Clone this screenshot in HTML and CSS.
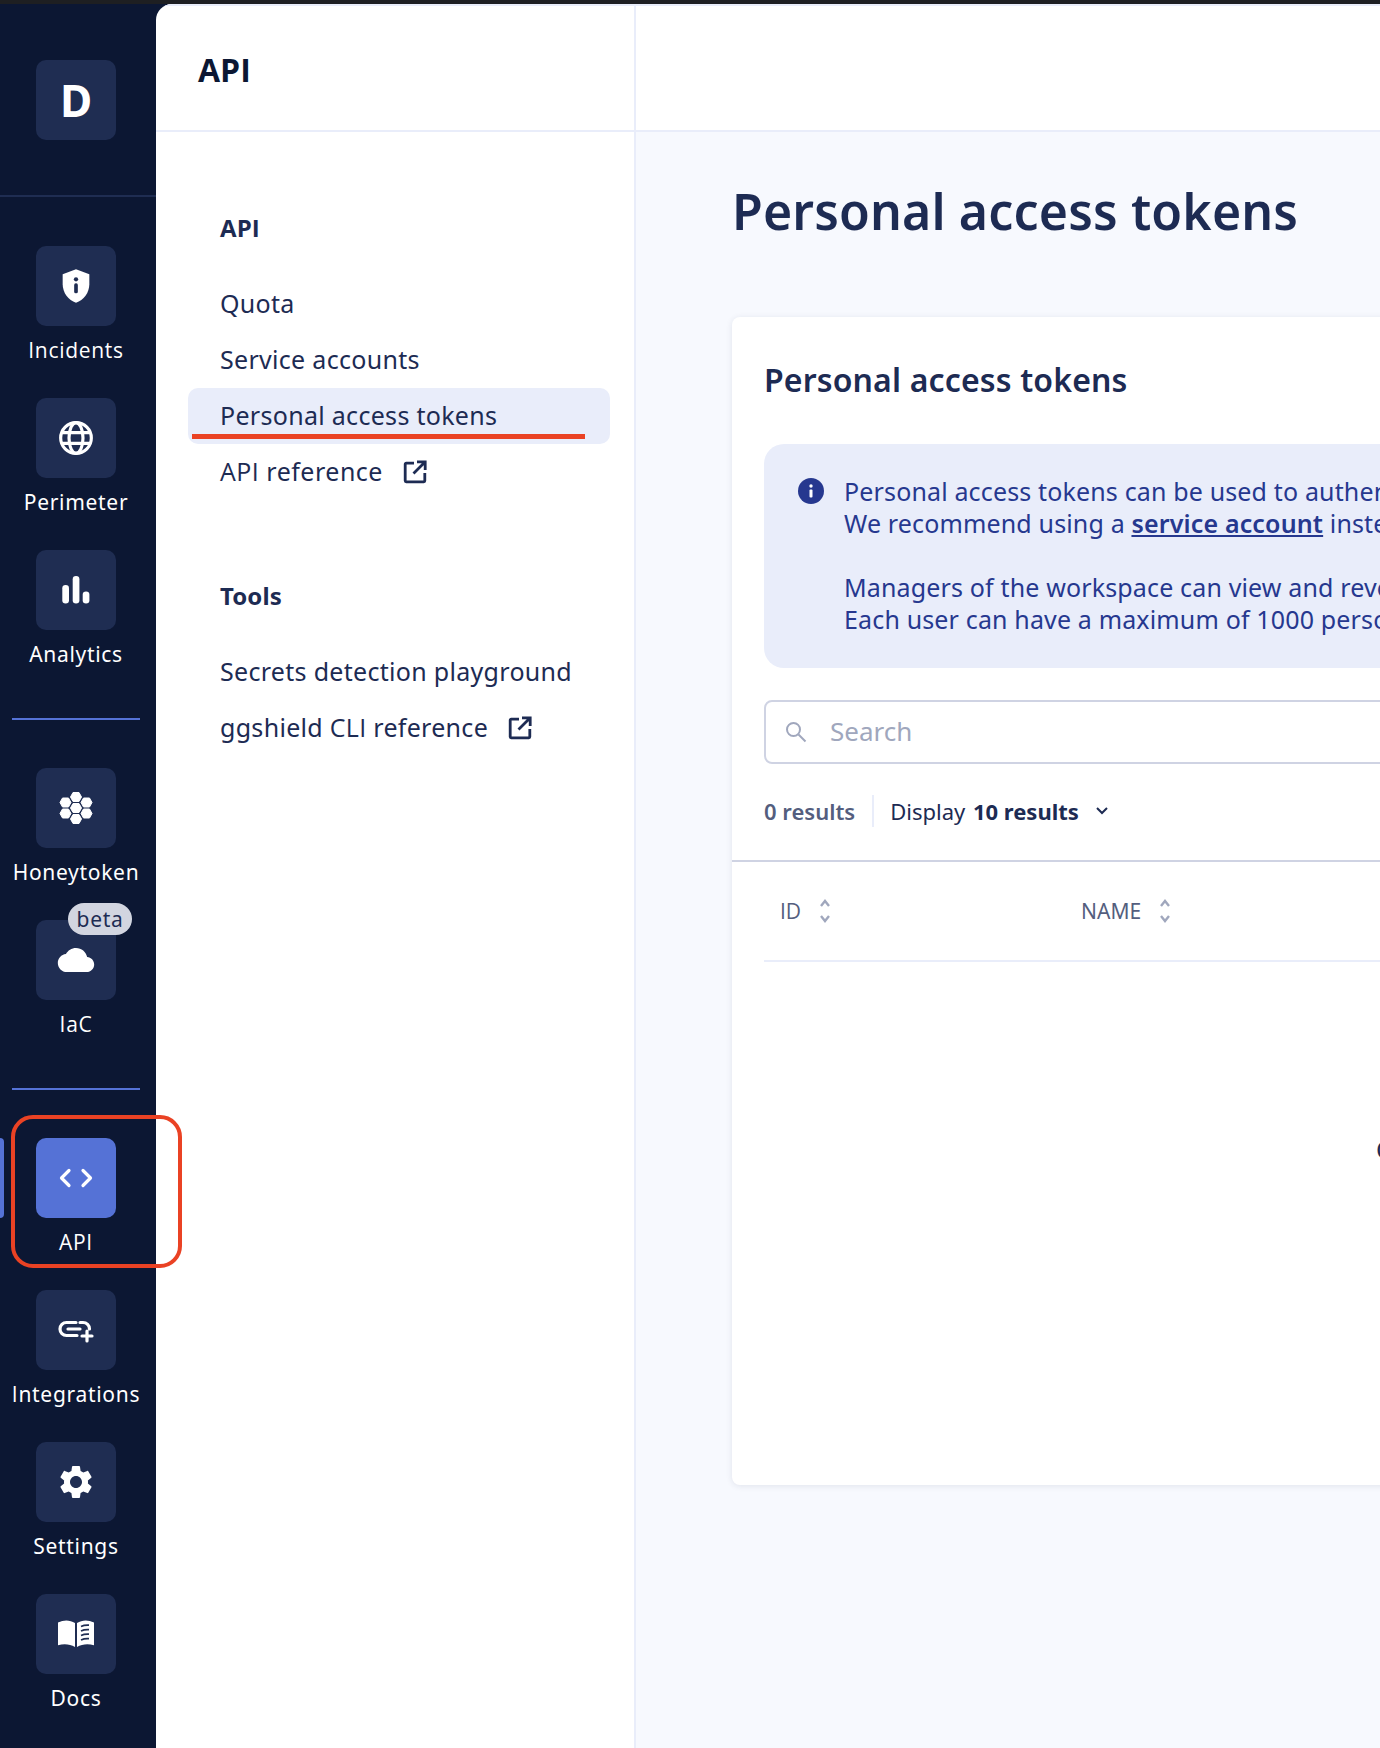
FILE: index.html
```html
<!DOCTYPE html>
<html lang="en">
<head>
<meta charset="utf-8">
<title>Personal access tokens</title>
<link rel="stylesheet" href="styles.css">
</head>
<body>
<div class="topbar"></div>
<div class="app">
  <aside class="rail">
    <div class="rail-head"><div class="tile tile-letter">D</div></div>
    <nav class="rail-group rail-group-first">
      <a class="rail-item"><span class="tile"><svg class="rail-icon" viewBox="0 0 24 24"><path fill="#fff" d="M12 2 4 5v6c0 5 3.4 9.7 8 11 4.6-1.3 8-6 8-11V5z"/><rect x="10.9" y="10.4" width="2.2" height="6" rx="1" fill="#1f2d52"/><circle cx="12" cy="8" r="1.3" fill="#1f2d52"/></svg></span><span class="rail-label plain-i">Incidents</span></a>
      <a class="rail-item"><span class="tile"><svg class="rail-icon" viewBox="0 0 24 24" fill="none" stroke="#fff" stroke-width="1.9"><circle cx="12" cy="12" r="9.2"/><ellipse cx="12" cy="12" rx="4.2" ry="9.2"/><path d="M3.4 8.8h17.2M3.4 15.2h17.2"/></svg></span><span class="rail-label">Perimeter</span></a>
      <a class="rail-item"><span class="tile"><svg class="rail-icon" viewBox="0 0 40 40" fill="#fff"><rect x="6.3" y="15" width="6.7" height="18.5" rx="3.3"/><rect x="16.7" y="6" width="6.7" height="27.5" rx="3.3"/><rect x="26.7" y="21.5" width="6.7" height="12" rx="3.3"/></svg></span><span class="rail-label">Analytics</span></a>
    </nav>
    <div class="rail-rule"></div>
    <nav class="rail-group">
      <a class="rail-item"><span class="tile"><svg class="rail-icon" viewBox="0 0 40 40" fill="#fff" stroke="#fff" stroke-width="1" stroke-linejoin="round"><polygon points="17,4.5 23,4.5 25.5,9 23,13.5 17,13.5 14.5,9"/><polygon points="17,26.5 23,26.5 25.5,31 23,35.5 17,35.5 14.5,31"/><polygon points="17,15.5 23,15.5 25.5,20 23,24.5 17,24.5 14.5,20"/><polygon points="6.5,10 12.5,10 15,14.5 12.5,19 6.5,19 4,14.5"/><polygon points="27.5,10 33.5,10 36,14.5 33.5,19 27.5,19 25,14.5"/><polygon points="6.5,21 12.5,21 15,25.5 12.5,30 6.5,30 4,25.5"/><polygon points="27.5,21 33.5,21 36,25.5 33.5,30 27.5,30 25,25.5"/></svg></span><span class="rail-label">Honeytoken</span></a>
      <a class="rail-item"><span class="tile"><svg class="rail-icon" viewBox="-1.2 -1.2 26.4 26.4"><path fill="#fff" d="M19.35 10.04C18.67 6.59 15.64 4 12 4 9.11 4 6.6 5.64 5.35 8.04 2.34 8.36 0 10.91 0 14c0 3.31 2.69 6 6 6h13c2.76 0 5-2.24 5-5 0-2.64-2.05-4.78-4.65-4.96z"/></svg><span class="badge">beta</span></span><span class="rail-label plain-i">IaC</span></a>
    </nav>
    <div class="rail-rule"></div>
    <nav class="rail-group">
      <a class="rail-item rail-item-active"><span class="tile"><svg class="rail-icon" viewBox="0 0 40 40" fill="none" stroke="#fff" stroke-width="3.2" stroke-linecap="round" stroke-linejoin="round"><path d="M13 12.500 5.500 20l7.500 7.500M27 12.500l7.500 7.500-7.500 7.500"/></svg></span><span class="rail-label plain-i">API</span></a>
      <a class="rail-item"><span class="tile"><svg class="rail-icon" viewBox="0 0 40 40" fill="none" stroke="#fff" stroke-width="3.2" stroke-linecap="round"><path d="M20 12.500H10.500a6.500 6.500 0 0 0 0 13H21M24 12.500h3a6.500 6.500 0 0 1 6.500 6.500M12 19h12M31 21v10M26 26h10"/></svg></span><span class="rail-label"><span class="plain-i">I</span>ntegrations</span></a>
      <a class="rail-item"><span class="tile"><svg class="rail-icon" viewBox="0 0 24 24"><path fill="#fff" d="M19.14 12.94c.04-.3.06-.61.06-.94 0-.32-.02-.64-.07-.94l2.03-1.58c.18-.14.23-.41.12-.61l-1.92-3.32c-.12-.22-.37-.29-.59-.22l-2.39.96c-.5-.38-1.03-.7-1.62-.94l-.36-2.54c-.04-.24-.24-.41-.48-.41h-3.84c-.24 0-.43.17-.47.41l-.36 2.54c-.59.24-1.13.57-1.62.94l-2.39-.96c-.22-.08-.47 0-.59.22L2.74 8.87c-.12.21-.08.47.12.61l2.03 1.58c-.05.3-.09.63-.09.94s.02.64.07.94l-2.03 1.58c-.18.14-.23.41-.12.61l1.92 3.32c.12.22.37.29.59.22l2.39-.96c.5.38 1.03.7 1.62.94l.36 2.54c.05.24.24.41.48.41h3.84c.24 0 .44-.17.47-.41l.36-2.54c.59-.24 1.13-.56 1.62-.94l2.39.96c.22.08.47 0 .59-.22l1.92-3.32c.12-.22.07-.47-.12-.61l-2.01-1.58zM12 15.6c-1.98 0-3.6-1.62-3.6-3.6s1.62-3.6 3.6-3.6 3.6 1.62 3.6 3.6-1.62 3.6-3.6 3.6z"/></svg></span><span class="rail-label">Settings</span></a>
      <a class="rail-item"><span class="tile"><svg class="rail-icon" viewBox="0 0 40 40"><path fill="#fff" d="M2 8.500C8 5.500 14 5.800 19 9v24c-5-3-11-3.400-17-1.800zM21 9c5-3.200 11-3.500 17-.5v22.700c-6-1.600-12-1.200-17 1.800z"/><path fill="none" stroke="#1f2d52" stroke-width="1.700" d="M25 12.500c2.500-1.200 5-1.500 8-1.300M25 17c2.500-1.200 5-1.500 8-1.300M25 21.500c2.500-1.200 5-1.500 8-1.300M25 26c2.500-1.200 5-1.500 8-1.300"/></svg></span><span class="rail-label">Docs</span></a>
    </nav>
  </aside>

  <aside class="panel">
    <header class="panel-head"><h2 class="panel-title plain-i">API</h2></header>
    <div class="panel-body">
      <section class="menu">
        <h3 class="menu-title plain-i">API</h3>
        <a class="menu-item">Quota</a>
        <a class="menu-item">Service accounts</a>
        <a class="menu-item menu-item-active">Personal access tokens<span class="mark-line"></span></a>
        <a class="menu-item"><span class="menu-api"><span class="plain-i">API</span> reference</span><svg class="ext" viewBox="0 0 24 24" fill="none" stroke="#1d2b53" stroke-width="2.800"><path d="M11 3.200H3.200a1 1 0 0 0-1 1v16.600a1 1 0 0 0 1 1h17.600a1 1 0 0 0 1-1V13"/><path d="M10.500 13.500 21.500 2.500M14 1.800h8.200V10"/></svg></a>
      </section>
      <section class="menu">
        <h3 class="menu-title">Tools</h3>
        <a class="menu-item">Secrets detection playground</a>
        <a class="menu-item"><span>ggshield <span class="plain-i">CLI</span> reference</span><svg class="ext" viewBox="0 0 24 24" fill="none" stroke="#1d2b53" stroke-width="2.800"><path d="M11 3.200H3.200a1 1 0 0 0-1 1v16.600a1 1 0 0 0 1 1h17.600a1 1 0 0 0 1-1V13"/><path d="M10.500 13.500 21.500 2.500M14 1.800h8.200V10"/></svg></a>
      </section>
    </div>
  </aside>

  <main class="main">
    <header class="main-head"></header>
    <div class="main-body">
      <h1 class="page-title">Personal access tokens</h1>
      <section class="card">
        <h2 class="card-title">Personal access tokens</h2>
        <div class="alert">
          <svg class="alert-icon" viewBox="0 0 26 26"><circle cx="13" cy="13" r="13" fill="#26388f"/><rect x="11.500" y="11.500" width="3" height="8" rx="1" fill="#fff"/><circle cx="13" cy="8" r="1.700" fill="#fff"/></svg>
          <div class="alert-text">
            <p>Personal access tokens can be used to authenticate to the API.<br>We recommend using a <a class="alert-link">service account</a> instead for long-term integrations.</p>
            <p>Managers of the workspace can view and revoke personal access tokens.<br>Each user can have a maximum of 1000 personal access tokens.</p>
          </div>
        </div>
        <div class="search">
          <svg class="search-icon" viewBox="0 0 22 22" fill="none" stroke="#a0a7bd" stroke-width="2"><circle cx="8.500" cy="8.500" r="6.500"/><path d="m13.500 13.500 7 7"/></svg>
          <span class="search-text">Search</span>
        </div>
        <div class="results">
          <span class="results-count">0 results</span>
          <span class="results-display">Display <b class="results-size">10 results</b></span>
          <svg class="results-chev" viewBox="0 0 14 10" fill="none" stroke="#1d2b53" stroke-width="2"><path d="m2 2 5 5 5-5"/></svg>
        </div>
        <div class="thead">
          <div class="thead-row">
            <div class="th th-id plain-i">ID<svg class="sort" viewBox="0 0 12 24" fill="none" stroke="#a0a7bd" stroke-width="2.400"><path d="m2 7 4-5 4 5M2 17l4 5 4-5"/></svg></div>
            <div class="th">NAME<svg class="sort" viewBox="0 0 12 24" fill="none" stroke="#a0a7bd" stroke-width="2.400"><path d="m2 7 4-5 4 5M2 17l4 5 4-5"/></svg></div>
          </div>
        </div>
        <div class="empty">Create a personal access token</div>
      </section>
    </div>
  </main>
</div>
<div class="mark-box"></div>
</body>
</html>
```
FILE: styles.css
```css
* { box-sizing: border-box; }
html, body { margin: 0; height: 1748px; overflow: hidden; }
body {
  position: relative;
  width: 1380px;
  background: #0c1733;
  color: #1d2b53;
  font-family: "Noto Sans", sans-serif;
}
h1, h2, h3, p { margin: 0; }
.plain-i { font-family: "Open Sans", sans-serif; }
.topbar { height: 4px; background: #1e1f22; }
.app { display: flex; height: 1744px; }

/* left rail */
.rail { width: 156px; flex: none; padding-right: 4px; background: #0c1733; display: flex; flex-direction: column; align-items: center; }
.rail-head { width: 156px; margin-right: -4px; padding-right: 4px; height: 193px; padding-top: 56px; border-bottom: 2px solid #1f2d52; display: flex; justify-content: center; align-items: flex-start; flex: none; }
.tile { width: 80px; height: 80px; border-radius: 10px; background: #1f2d52; display: flex; align-items: center; justify-content: center; position: relative; flex: none; }
.tile-letter { color: #fff; font-size: 44px; font-weight: 700; line-height: 78px; }
.rail-group { display: flex; flex-direction: column; align-items: center; width: 100%; }
.rail-group-first { margin-top: 49px; }
.rail-item { height: 152px; width: 100%; display: flex; flex-direction: column; align-items: center; position: relative; }
.rail-icon { width: 40px; height: 40px; display: block; }
.rail-label { color: #fff; font-size: 21px; line-height: 28px; margin-top: 10px; letter-spacing: .7px; white-space: nowrap; }
.rail-rule { width: 128px; height: 2px; background: #5572d6; margin: 16px 0 48px; flex: none; }
.rail-item-active .tile { background: #5572d6; }
.rail-item-active::before { content: ""; position: absolute; left: 0; top: 0; width: 4px; height: 80px; background: #5572d6; border-radius: 0 4px 4px 0; }
.badge { position: absolute; left: 32px; top: -17px; width: 64px; height: 32px; border-radius: 16px; background: #d2d5e0; color: #1d2b53; font-size: 21px; line-height: 33px; text-align: center; letter-spacing: .7px; }

/* secondary panel */
.panel { width: 480px; flex: none; background: #fff; border-right: 2px solid #e9edfa; border-radius: 16px 0 0 0; overflow: hidden; }
.panel-head { height: 128px; border-top: 2px solid #e9edfa; border-bottom: 2px solid #e9edfa; padding: 3px 0 0 42px; display: flex; align-items: center; }
.panel-title { font-size: 32px; font-weight: 700; color: #0c1733; }
.panel-body { padding: 0 24px 0 32px; }
.menu { display: flex; flex-direction: column; padding-top: 80px; }
.menu + .menu { padding-top: 80px; }
.menu-title { font-size: 24px; line-height: 32px; font-weight: 700; padding-left: 32px; margin-bottom: 32px; letter-spacing: .1px; }
.menu-item { height: 56px; padding: 0 0 2px 32px; display: flex; align-items: center; font-size: 25px; letter-spacing: .3px; border-radius: 10px; position: relative; white-space: nowrap; }
.menu-item-active { background: #e9edfa; }
.menu-api { letter-spacing: .5px; }
.mark-line { position: absolute; left: 4px; bottom: 5px; width: 393px; height: 5px; background: #ea4224; }
.ext { width: 24px; height: 24px; margin: 2px 0 0 20px; flex: none; }

/* main */
.main { flex: 1; min-width: 0; background: #f7f9fe; }
.main-head { height: 128px; background: #fff; border-top: 2px solid #e9edfa; border-bottom: 2px solid #e9edfa; }
.main-body { padding: 0 0 0 96px; }
.page-title { font-size: 50px; line-height: 64px; font-weight: 600; margin-top: 47px; white-space: nowrap; letter-spacing: .15px; }
.card { width: 900px; height: 1168px; margin-top: 74px; background: #fff; border-radius: 8px; box-shadow: 0 1px 6px rgba(29, 43, 83, .1); padding-top: 40px; }
.card-title { font-size: 32px; line-height: 46px; font-weight: 600; margin-left: 32px; white-space: nowrap; letter-spacing: .15px; }
.alert { margin: 41px 0 0 32px; height: 224px; background: #e9edfa; border-radius: 20px; padding: 31px 0 0 34px; display: flex; gap: 20px; color: #26388f; }
.alert-icon { width: 26px; height: 26px; flex: none; margin-top: 3px; }
.alert-text { font-size: 25px; line-height: 32px; white-space: nowrap; letter-spacing: .15px; }
.alert-text p + p { margin-top: 32px; }
.alert-link { font-weight: 600; text-decoration: underline; }
.search { margin: 32px 0 0 32px; height: 64px; border: 2px solid #cfd3e3; border-radius: 8px; display: flex; align-items: center; padding-left: 19px; }
.search-icon { width: 22px; height: 22px; flex: none; }
.search-text { font-size: 26px; color: #a0a7bd; margin-left: 23px; line-height: 32px; padding-bottom: 2px; }
.results { margin-left: 32px; height: 96px; display: flex; align-items: center; padding-bottom: 3px; font-size: 22px; }
.results-count { font-weight: 600; color: #545e7e; padding-right: 17px; border-right: 2px solid #e9edfa; line-height: 32px; }
.results-display { margin-left: 16px; }
.results-size { font-weight: 700; margin-left: 2px; }
.results-chev { width: 14px; height: 10px; margin-left: 16px; }
.thead { border-top: 2px solid #cfd3e3; padding-left: 32px; }
.thead-row { height: 100px; display: flex; border-bottom: 2px solid #e9edfa; }
.th { width: 302px; flex: none; display: flex; align-items: center; color: #545e7e; font-size: 21px; gap: 18px; }
.th-id { width: 317px; padding-left: 16px; }
.sort { width: 12px; height: 24px; flex: none; }
.empty { margin-top: 171px; margin-left: 644px; font-size: 25px; line-height: 32px; white-space: nowrap; }

/* annotation */
.mark-box { position: absolute; left: 11px; top: 1115px; width: 171px; height: 153px; border: 4px solid #ea4224; border-radius: 22px; }
```
